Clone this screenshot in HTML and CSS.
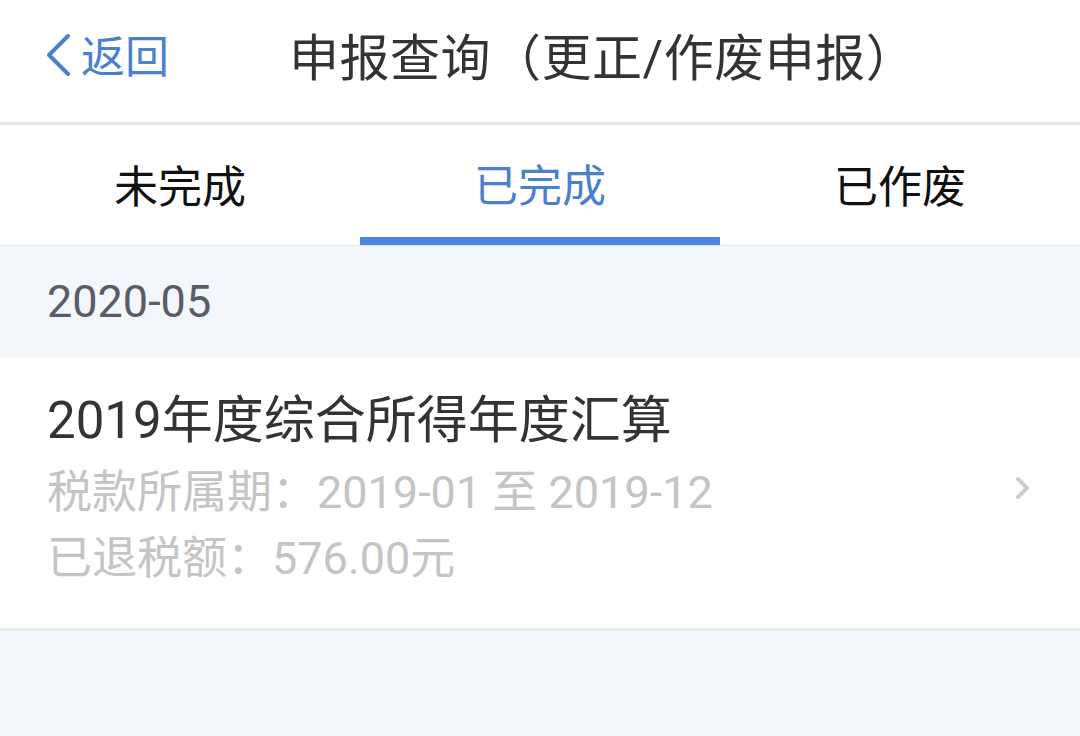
FILE: index.html
```html
<!DOCTYPE html>
<html>
<head>
    <meta charset="UTF-8">
    <title>申报查询</title>
    <link rel="stylesheet" href="styles.css">
</head>
<body>
    <div class="header">
        <div class="back">
            <svg class="back-icon" width="28" height="44" viewBox="0 0 28 44">
                <path d="M24 3 L5 22 L24 41" fill="none" stroke="#4a80cc" stroke-width="4" stroke-linecap="round" stroke-linejoin="round"/>
            </svg>
            <span>返回</span>
        </div>
        <div class="title">申报查询（更正/作废申报）</div>
    </div>

    <div class="tabs">
        <div class="tab">未完成</div>
        <div class="tab active">已完成</div>
        <div class="tab">已作废</div>
    </div>

    <div class="month">2020-05</div>

    <div class="item">
        <div class="item-body">
            <div class="item-title">2019年度综合所得年度汇算</div>
            <div class="item-line">税款所属期：2019-01 至 2019-12</div>
            <div class="item-line">已退税额：576.00元</div>
        </div>
        <svg class="arrow" width="18" height="26" viewBox="0 0 18 26">
            <path d="M4 4 L13 13 L4 22" fill="none" stroke="#cccccc" stroke-width="4" stroke-linecap="round" stroke-linejoin="round"/>
        </svg>
    </div>
</body>
</html>
```

FILE: styles.css
```css
body {
    margin: 0;
    background-color: #f3f6fa;
    font-family: Roboto, "Noto Sans CJK SC", sans-serif;
    width: 1080px;
    height: 736px;
    overflow: hidden;
}
.header {
    height: 125px;
    box-sizing: border-box;
    padding-bottom: 14px;
    background: white;
    border-bottom: 3px solid #e6e6e6;
    display: flex;
    align-items: center;
}
.back {
    display: flex;
    align-items: center;
    margin-left: 44px;
    color: #4a80cc;
    font-size: 44px;
}
.back-icon {
    margin-right: 9px;
    margin-top: 2px;
}
.title {
    margin-left: 120px;
    font-size: 50px;
    color: #333;
    letter-spacing: 0.5px;
}
.tabs {
    display: flex;
    height: 120px;
    background: white;
    border-bottom: 1px solid #e4e6ea;
}
.tab {
    flex: 1;
    display: flex;
    align-items: center;
    justify-content: center;
    font-size: 44px;
    color: #111;
    box-sizing: border-box;
    padding-bottom: 2px;
}
.tab.active {
    color: #4a80cc;
    border-bottom: 8px solid #4a86e0;
    padding-top: 6px;
}
.month {
    height: 111px;
    line-height: 111px;
    padding-left: 47px;
    font-size: 45px;
    color: #575c66;
}
.item {
    background: white;
    height: 271px;
    border-bottom: 3px solid #ececee;
    display: flex;
    align-items: center;
    padding: 0 48px 0 47px;
}
.item-body {
    flex: 1;
    margin-top: -8px;
}
.item-title {
    font-size: 51px;
    color: #333;
    line-height: 72px;
    margin-bottom: 3px;
}
.item-line {
    font-size: 45px;
    color: #c4c4c4;
    line-height: 66px;
}
.arrow {
    margin-top: -10px;
}
```
